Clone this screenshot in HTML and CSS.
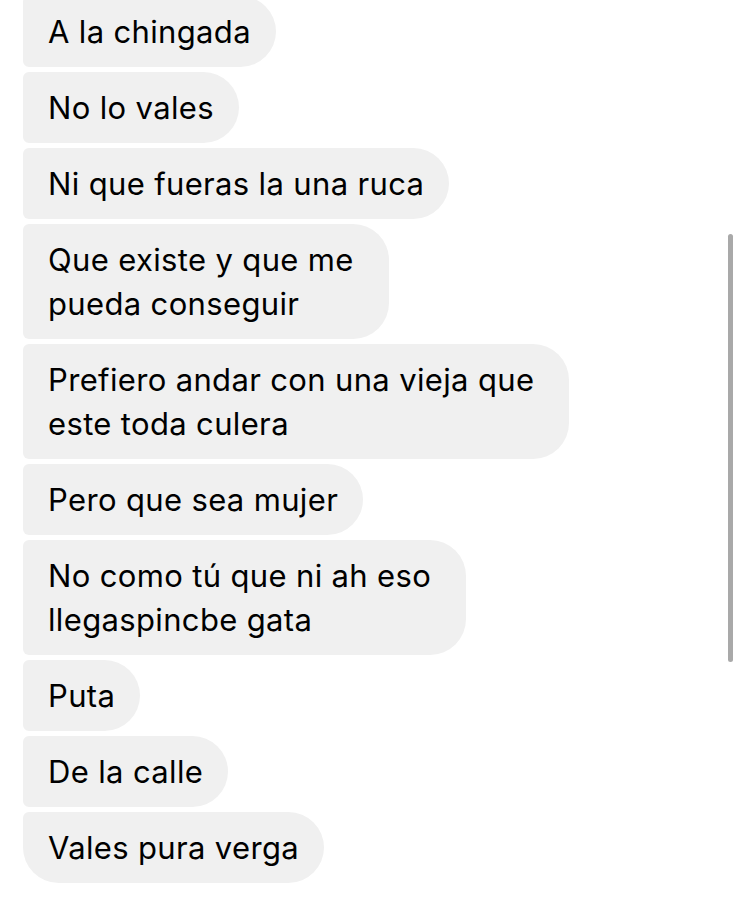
FILE: index.html
```html
<!DOCTYPE html>
<html lang="es">
<head>
<meta charset="UTF-8">
<meta name="viewport" content="width=device-width, initial-scale=1.0">
<title>Chat</title>
<link rel="stylesheet" href="styles.css">
</head>
<body>

<div id="chat-container">
    <div class="message">A la chingada</div>
    <div class="message">No lo vales</div>
    <div class="message">Ni que fueras la una ruca</div>
    <div class="message multi">Que existe y que me<br>pueda conseguir</div>
    <div class="message multi">Prefiero andar con una vieja que<br>este toda culera</div>
    <div class="message">Pero que sea mujer</div>
    <div class="message multi">No como tú que ni ah eso<br>llegaspincbe gata</div>
    <div class="message">Puta</div>
    <div class="message">De la calle</div>
    <div class="message last">Vales pura verga</div>
</div>

<div class="scrollbar"></div>

</body>
</html>
```

FILE: styles.css
```css
body {
    font-family: 'Inter', 'Roboto', sans-serif;
    margin: 0;
    padding: 0;
    background-color: #fff;
    color: #000;
    overflow: hidden;
}

#chat-container {
    display: flex;
    flex-direction: column;
    align-items: flex-start;
    gap: 5px;
    margin-top: -4px;
    padding-left: 23px;
}

.message {
    background-color: #f0f0f0; /* Light grey bubble */
    font-size: 31px;
    letter-spacing: 0.35px;
    line-height: 44px;
    padding: 13.5px 25px;
    border-radius: 6px 36px 36px 6px;
}

.message.multi {
    padding-right: 35px;
}

.message.last {
    border-bottom-left-radius: 36px;
}

.scrollbar {
    position: absolute;
    top: 234px;
    left: 728px;
    width: 5px;
    height: 428px;
    background-color: #a9a9a9;
    border-radius: 3px;
}
```
